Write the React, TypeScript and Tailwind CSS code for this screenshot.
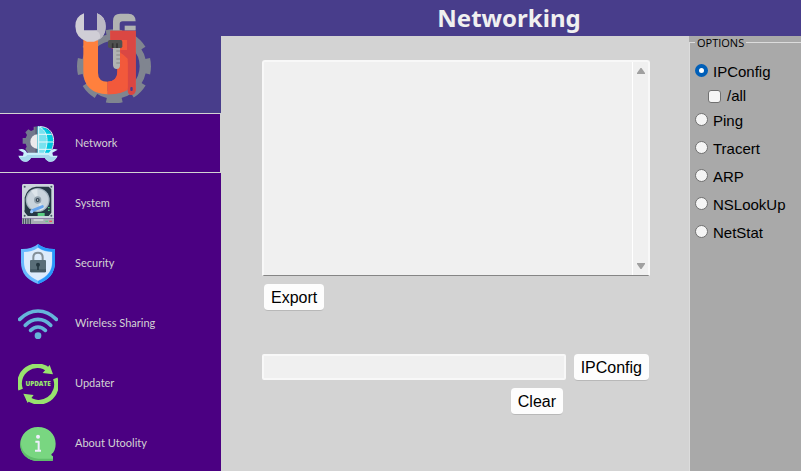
import { useState, type ReactNode } from "react";

function Logo() {
  return (
    <svg viewBox="42 36 228 273" className="h-[91px] w-[76px]" aria-label="Utoolity" role="img">
      <circle cx="159" cy="199" r="87" fill="none" stroke="#808590" strokeWidth="20" />
      <circle cx="159" cy="199" r="100" fill="none" stroke="#808590" strokeWidth="22" strokeDasharray="46 32.54" strokeDashoffset="24" />
      <path d="M67 115h44v103q0 27 29 27v38q-73-3-73-70z" fill="#ff803d" />
      <path d="M148 92h76v180q-8 10-19 8V266q-22 17-65 17V245q29 0 29-28V140h-21z" fill="#f2593b" />
      <path d="M148 92h76v180q-3 14-15 13-9-2-9-15V176q-20-22-52-33z" fill="#da4743" />
      <path d="M183 120h15v30h-20v15q21 5 22 25v75q-22 18-60 18V245q28 0 29-28v-72h14z" fill="#f2593b" />
      <path d="M156 91V63q0-22 22-22h24q22 0 22 23h-39q-9 0-9 8v19z" fill="#b1b3b2" />
      <path d="M191 77h33v14h-33z" fill="#b1b3b2" />
      <path d="M69 40v51h39V40q25 9 26 39 0 36-35 46H78q-34-11-35-46 0-30 26-39z" fill="#d0ced6" />
      <path d="M108 40v51H96q26 1 21 27-8 8-39 7h16q40-5 40-46 0-30-26-39z" fill="#bbb8c5" />
      <path d="M156 142h21v53q0 12-10 12t-11-12z" fill="#b1b3b2" />
      <path d="M166 153h11M166 165h11M166 177h11M166 189h11" stroke="#858786" strokeWidth="3" />
      <rect x="141" y="120" width="43" height="24" rx="5" fill="#505150" />
      <path d="M155 130v14M168 130v14" stroke="#333" strokeWidth="5" />
      <rect x="208" y="261" width="7" height="12" rx="3" fill="#483d8b" />
    </svg>
  );
}

function NetworkIcon() {
  return (
    <svg viewBox="54 57 120 120" className="size-10 shrink-0" aria-hidden="true">
      <path d="M113 65h-12v9l-8 4-8-5-9 9 5 8-4 9h-9v17h9l3 9-4 7 8 12h29z" fill="#72788d" />
      <path d="M113 65h-7v79h7z" fill="#5b6178" />
      <path d="M113 88a22 22 0 0 0 0 44z" fill="#eceaec" />
      <path d="M113 64c30 0 47 20 47 46 0 14-5 26-12 34h-35z" fill="#00c8df" />
      <path d="M113 64c19 6 27 25 27 46 0 14-3 25-8 34h-19z" fill="#78e2ef" />
      <path d="M116 64v80M116 65c32 12 28 55 17 79M116 88h39M116 111h44M116 133h38M120 65c48 0 48 57 29 79" fill="none" stroke="#e9f8fb" strokeWidth="3" />
      <path d="M55 134q18-6 26 9h66q8-15 26-9l-16 9 2 9h14q-8 19-22 18-10-1-16-12H93q-6 11-16 12-14 1-22-18h14l2-9z" fill="#c9effc" />
      <path d="M57 156h13q9 0 12-6h64q4 6 12 6h13q-10 14-21 14-10-1-16-12H93q-6 11-16 12-11 0-20-14z" fill="#a6d8ed" />
    </svg>
  );
}

function DiskIcon() {
  return (
    <svg viewBox="54 27 120 120" className="size-10 shrink-0" aria-hidden="true">
      <path d="M70 27h87q5 0 5 5v98H66V32q0-5 4-5z" fill="#cbd5dc" />
      <path d="M108 35h38l8 8v70l-8 10H84l-10-12V68q7-30 34-33z" fill="#263845" />
      <circle cx="113" cy="75" r="36" fill="#a6b6c1" />
      <circle cx="113" cy="75" r="32" fill="#c9d4dc" />
      <path d="M113 75L93 47a34 34 0 0 1 19-5zM113 75l21 24a34 34 0 0 1-14 8z" fill="#dde5ea" />
      <circle cx="113" cy="75" r="11" fill="#92a1ab" />
      <circle cx="113" cy="75" r="6" fill="#344552" />
      <circle cx="113" cy="75" r="2" fill="#eee" />
      <path d="M74 105l16-3 12 12-10 9h-8l-10-12z" fill="#263845" />
      <path d="M97 107l30-12" stroke="#65a4ed" strokeWidth="9" strokeLinecap="round" />
      <circle cx="95" cy="110" r="5" fill="#9bcbff" />
      <path d="M113 114h21v9h-21zM144 96h5v4h-5zM144 104h5v4h-5z" fill="#5ace83" />
      <circle cx="74" cy="35" r="3" fill="#455966" /><circle cx="154" cy="35" r="3" fill="#455966" />
      <circle cx="74" cy="122" r="3" fill="#455966" /><circle cx="154" cy="122" r="3" fill="#455966" />
      <path d="M66 130h96v17H66z" fill="#a7aeb4" />
      <path d="M70 131v16M77 131v16M84 131v16M91 131v16" stroke="#384955" strokeWidth="3" />
      <path d="M101 132h29v6h-29z" fill="#cad1d5" />
      <path d="M136 139h8" stroke="#5ace83" strokeWidth="3" /><path d="M148 139h8" stroke="#f34b5c" strokeWidth="4" />
    </svg>
  );
}

function ShieldIcon() {
  return (
    <svg viewBox="54 27 120 120" className="size-10 shrink-0" aria-hidden="true">
      <path d="M114 27q19 16 51 15v40q0 47-51 65-51-18-51-65V42q32 1 51-15z" fill="#68b9ff" />
      <path d="M114 27q19 16 51 15v40q0 47-51 65v-9q43-17 43-56V50q-25 0-43-13z" fill="#2998fb" />
      <path d="M114 38q19 13 42 13v31q0 38-42 55-42-17-42-55V51q23 0 42-13z" fill="#dcecfc" />
      <path d="M100 78V67q0-14 14-14t14 14v11" fill="none" stroke="#84919a" strokeWidth="6" />
      <rect x="90" y="75" width="48" height="37" rx="3" fill="#596e78" />
      <path d="M91 103h47v6q0 3-3 3H93q-2 0-2-3z" fill="#455a64" />
      <circle cx="114" cy="89" r="6" fill="#23363f" /><path d="M114 89v16" stroke="#23363f" strokeWidth="5" />
    </svg>
  );
}

function WifiIcon() {
  return (
    <svg viewBox="54 27 120 120" className="size-10 shrink-0" aria-hidden="true">
      <g fill="none" stroke="#65b5da" strokeWidth="11" strokeLinecap="round">
        <path d="M59 73q25-25 55-25t55 25M76 91q16-18 38-18t38 18M92 106q10-10 22-10t22 10" />
      </g>
      <circle cx="114" cy="122" r="10" fill="#65b5da" />
    </svg>
  );
}

function UpdateIcon() {
  return (
    <svg viewBox="54 27 120 120" className="size-10 shrink-0" aria-hidden="true">
      <g fill="none" stroke="#98e36e" strokeWidth="14">
        <path d="M62 104A53 53 0 0 1 146 45" /><path d="M166 70A53 53 0 0 1 82 129" />
      </g>
      <path d="M149 30l10 28-31-4zM70 116l31 4-18 24z" fill="#98e36e" />
      <text x="114" y="94" textAnchor="middle" fontSize="19" fontWeight="800" fontFamily="Open Sans, sans-serif" fill="#98e36e">UPDATE</text>
    </svg>
  );
}

function InfoIcon() {
  return (
    <svg viewBox="54 39 120 120" className="size-10 shrink-0" aria-hidden="true">
      <path d="M114 48c31 0 53 22 53 50 0 14-4 25-13 32q0 5 5 6v12q-2 3-7 2h-38c-30 0-53-22-53-51 0-28 23-51 53-51z" fill="#79d681" />
      <path d="M62 88q0 50 53 55h44v5q-2 3-7 2h-38c-36 0-60-28-52-62z" fill="#60bd6b" />
      <circle cx="114" cy="77" r="6" fill="#eeeefc" />
      <path d="M106 92h10v27M105 119h18" fill="none" stroke="#eeeefc" strokeWidth="6" strokeLinejoin="round" />
    </svg>
  );
}

const sections: { name: string; icon: ReactNode }[] = [
  { name: "Network", icon: <NetworkIcon /> },
  { name: "System", icon: <DiskIcon /> },
  { name: "Security", icon: <ShieldIcon /> },
  { name: "Wireless Sharing", icon: <WifiIcon /> },
  { name: "Updater", icon: <UpdateIcon /> },
  { name: "About Utoolity", icon: <InfoIcon /> },
];

const commands = ["IPConfig", "Ping", "Tracert", "ARP", "NSLookUp", "NetStat"];

const buttonStyle =
  "h-[27px] rounded-[4px] border-b border-[#b8b8b8] bg-[#fdfdfd] px-[7px] pt-px text-base leading-6 text-black";

export default function App() {
  const [section, setSection] = useState("Network");
  const [command, setCommand] = useState("IPConfig");

  return (
    <div className="flex h-screen overflow-hidden bg-[#d3d3d3] font-['Liberation_Sans',Arial,sans-serif] text-black">
      <aside className="flex w-[221px] shrink-0 flex-col bg-[#4b0082]">
        <div className="flex h-[113px] shrink-0 justify-center bg-[#483d8b] pt-3 pl-1">
          <Logo />
        </div>
        <nav>
          {sections.map(({ name, icon }) => (
            <button
              key={name}
              type="button"
              onClick={() => setSection(name)}
              className={`flex h-[60px] w-full items-center gap-[17px] border border-l-0 pt-px pl-[18px] text-left font-['Lato',sans-serif] text-[11px] text-[#d3d3d3] ${section === name ? "border-[#d3d3d3]" : "border-transparent"}`}
            >
              {icon}
              <span>{name}</span>
            </button>
          ))}
        </nav>
      </aside>

      <div className="flex min-w-0 flex-1 flex-col">
        <header className="flex h-9 shrink-0 items-center justify-center bg-[#483d8b] pr-1">
          <h1 className="font-['Noto_Sans',sans-serif] text-2xl leading-9 font-bold text-[#f0f0f0]">Networking</h1>
        </header>

        <div className="flex min-h-0 flex-1">
          <main className="flex min-w-0 flex-1 flex-col items-start pt-6 pr-[39px] pl-[41px]">
            <div className="flex h-[216px] w-full rounded-t-[3px] border-2 border-b border-[#f8f8f8] border-b-[#858585] bg-[#f0f0f0]">
              <textarea aria-label="Command output" readOnly className="min-w-0 flex-1 resize-none bg-transparent p-1 text-sm outline-none" />
              <div className="flex w-4 flex-col items-center justify-between border-l border-white py-[5px]">
                <button type="button" aria-label="Scroll up">
                  <svg viewBox="0 0 8 8" className="size-2"><path d="M3.5 1h1L8 6v1H0V6z" fill="#a0a0a0" /></svg>
                </button>
                <button type="button" aria-label="Scroll down">
                  <svg viewBox="0 0 8 8" className="size-2"><path d="M3.5 7h1L8 2V1H0v1z" fill="#a0a0a0" /></svg>
                </button>
              </div>
            </div>
            <button type="button" className={`mt-2 ml-0.5 ${buttonStyle}`}>Export</button>
            <div className="mt-[43px] flex w-full gap-2">
              <input aria-label="Target" className="h-[26px] min-w-0 flex-1 rounded-[2px] border-2 border-[#f8f8f8] bg-[#f0f0f0] px-1 text-base outline-none" />
              <button type="button" className={`mr-px ${buttonStyle}`}>{command}</button>
            </div>
            <button type="button" className={`mt-[7px] mr-[87px] self-end ${buttonStyle}`}>Clear</button>
          </main>

          <aside className="w-[112px] shrink-0 bg-[#a9a9a9]">
            <fieldset className="h-full border-t border-l border-[#dcdcdc] pl-[5px]">
              <legend className="px-0.5 font-['Open_Sans',sans-serif] text-[11px] leading-[13px]">OPTIONS</legend>
              <div className="pt-[9px] text-[15px]">
                {commands.map((name) => (
                  <div key={name}>
                    <label className="flex h-7 items-center gap-[5px]">
                      <input
                        type="radio"
                        name="command"
                        checked={command === name}
                        onChange={() => setCommand(name)}
                        className="mb-[3px] size-[13px] shrink-0 appearance-none rounded-full border border-[#707070] bg-[#f5f5f5] checked:border-4 checked:border-[#005fb8] checked:bg-white"
                      />
                      {name}
                    </label>
                    {name === "IPConfig" && (
                      <label className="flex h-[21px] items-center gap-[6px] pl-[13px]">
                        <input type="checkbox" className="size-[13px] shrink-0 appearance-none rounded-[3px] border border-[#707070] bg-[#f5f5f5] checked:bg-[#005fb8]" />
                        /all
                      </label>
                    )}
                  </div>
                ))}
              </div>
            </fieldset>
          </aside>
        </div>
      </div>
    </div>
  );
}
